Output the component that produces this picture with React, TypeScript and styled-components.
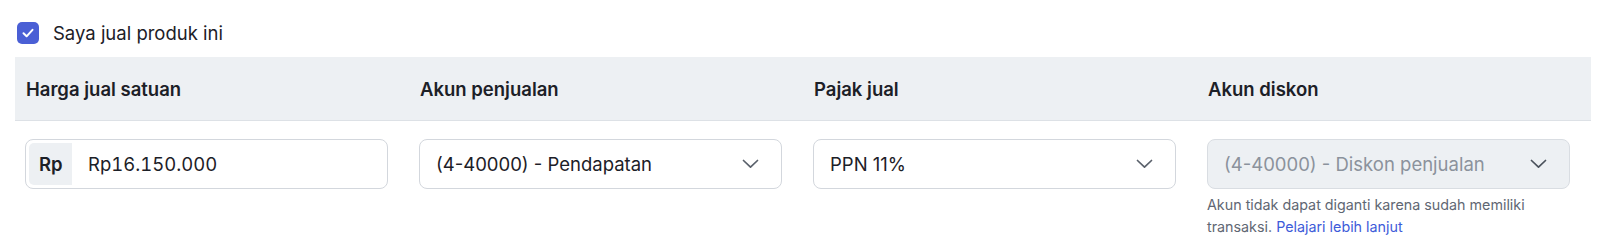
import React from "react";
import styled, { createGlobalStyle } from "styled-components";

const Global = createGlobalStyle`
  html, body { margin: 0; padding: 0; background: #fff; }
  body { font-family: Inter, "Noto Sans", "Liberation Sans", sans-serif; color: #1c2027; -webkit-font-smoothing: antialiased; }
  * { box-sizing: border-box; }
`;

const Page = styled.div`
  padding: 22px 9px 0 15px;
`;

const CheckRow = styled.label`
  display: flex;
  align-items: center;
  gap: 14px;
  padding-left: 2px;
  height: 22px;
  font-size: 18.5px;
  line-height: 22px;
  color: #1c2027;
`;

const CheckBox = styled.span`
  width: 22px;
  height: 22px;
  border-radius: 5px;
  background: #4a5fd5;
  display: flex;
  align-items: center;
  justify-content: center;
`;

const Table = styled.div`
  margin-top: 13px;
  display: grid;
  grid-template-columns: repeat(4, 394px);
`;

const HeadCell = styled.div`
  height: 64px;
  background: #edf0f3;
  border-bottom: 1px solid #dde1e6;
  padding-left: 11px;
  display: flex;
  align-items: center;
  font-size: 18.5px;
  font-weight: 600;
  color: #1c2027;
`;

const BodyCell = styled.div`
  padding: 18px 21px 0 10px;
`;

const Field = styled.div<{ $disabled?: boolean }>`
  height: 50px;
  border: 1px solid ${(p) => (p.$disabled ? "#d9dde2" : "#d3d7dd")};
  border-radius: 8px;
  background: ${(p) => (p.$disabled ? "#edf0f3" : "#fff")};
  display: flex;
  align-items: center;
  font-size: 18.5px;
  color: ${(p) => (p.$disabled ? "#8b929c" : "#1c2027")};
`;

const MoneyField = styled(Field)`
  padding: 3px;
  align-items: stretch;
`;

const Addon = styled.span`
  width: 43px;
  background: #edf0f3;
  border-radius: 5px 0 0 5px;
  display: flex;
  align-items: center;
  padding-left: 10px;
  font-weight: 600;
  color: #1c2027;
`;

const Value = styled.span`
  display: flex;
  align-items: center;
  padding-left: 16px;
  font-variant-numeric: tabular-nums;
`;

const SelectField = styled(Field)`
  padding: 0 22px 0 16px;
  justify-content: space-between;
`;

const Help = styled.p`
  margin: 5px 0 0;
  font-size: 14.3px;
  line-height: 22px;
  color: #5f6773;
`;

const HelpLink = styled.a`
  color: #3d5bd9;
  text-decoration: none;
`;

const Chevron = ({ color }: { color: string }) => (
  <svg width="17" height="10" viewBox="0 0 17 10" fill="none">
    <path d="M1.5 1.5 L8.5 8.2 L15.5 1.5" stroke={color} strokeWidth="1.7" strokeLinecap="round" strokeLinejoin="round" />
  </svg>
);

export default function App() {
  return (
    <Page>
      <Global />
      <CheckRow>
        <CheckBox>
          <svg width="14" height="14" viewBox="0 0 14 14" fill="none">
            <path d="M2.5 7.3 L5.6 10.3 L11.5 3.8" stroke="#fff" strokeWidth="2" strokeLinecap="round" strokeLinejoin="round" />
          </svg>
        </CheckBox>
        Saya jual produk ini
      </CheckRow>
      <Table>
        <HeadCell>Harga jual satuan</HeadCell>
        <HeadCell>Akun penjualan</HeadCell>
        <HeadCell>Pajak jual</HeadCell>
        <HeadCell>Akun diskon</HeadCell>
        <BodyCell>
          <MoneyField>
            <Addon>Rp</Addon>
            <Value>Rp16.150.000</Value>
          </MoneyField>
        </BodyCell>
        <BodyCell>
          <SelectField>
            <span>(4-40000) - Pendapatan</span>
            <Chevron color="#5a616b" />
          </SelectField>
        </BodyCell>
        <BodyCell>
          <SelectField>
            <span>PPN 11%</span>
            <Chevron color="#5a616b" />
          </SelectField>
        </BodyCell>
        <BodyCell>
          <SelectField $disabled>
            <span>(4-40000) - Diskon penjualan</span>
            <Chevron color="#4b525c" />
          </SelectField>
          <Help>
            Akun tidak dapat diganti karena sudah memiliki transaksi.{" "}
            <HelpLink href="#">Pelajari lebih lanjut</HelpLink>
          </Help>
        </BodyCell>
      </Table>
    </Page>
  );
}
